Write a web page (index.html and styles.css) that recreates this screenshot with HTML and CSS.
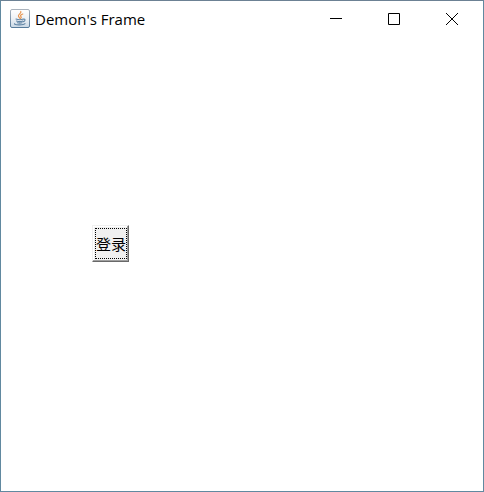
FILE: index.html
```html
<!DOCTYPE html>
<html lang="zh-CN">
<head>
<meta charset="utf-8">
<title>Demon's Frame</title>
<link rel="stylesheet" href="styles.css">
</head>
<body>
<div class="window">
  <header class="titlebar">
    <svg class="app-icon" viewBox="0 0 20 20" aria-hidden="true">
      <defs>
        <linearGradient id="tile" x1="0" y1="0" x2="0" y2="1">
          <stop offset="0" stop-color="#ffffff"/>
          <stop offset="0.5" stop-color="#eef2f6"/>
          <stop offset="1" stop-color="#c9d7e4"/>
        </linearGradient>
        <linearGradient id="edge" x1="0" y1="0" x2="0" y2="1">
          <stop offset="0" stop-color="#a9b2bc"/>
          <stop offset="1" stop-color="#577b9b"/>
        </linearGradient>
      </defs>
      <rect x="0.5" y="0.5" width="19" height="18" rx="1.5" fill="url(#tile)" stroke="url(#edge)"/>
      <path d="M10.8 2.5c1 2-3.300 2.800-2.300 4.800.3.700 1 1.200 1.400 2M12.800 5c-2.500 1-2.700 1.700-1.700 2.900.4.500.1 1-.5 1.500" fill="none" stroke="#e8954f" stroke-width="1.200" stroke-linecap="round"/>
      <path d="M6 10c2 .8 5.500.8 7.300 0M6.500 12c2 .8 4.500.8 6.200 0M7.500 13.700c1.500.6 3 .6 4.500 0M13.500 10.200c2.200-.5 1.800 2-.2 2.400M4.700 14.600c-1.700 1.500 8.800 1.900 10.300.1" fill="none" stroke="#6386a6" stroke-width="1.100" stroke-linecap="round"/>
    </svg>
    <h1 class="title">Demon's Frame</h1>
    <div class="controls">
      <button class="control" type="button" aria-label="Minimize">
        <svg viewBox="0 0 12 12" aria-hidden="true"><path d="M0 5.500h12"/></svg>
      </button>
      <button class="control" type="button" aria-label="Maximize">
        <svg viewBox="0 0 12 12" aria-hidden="true"><path d="M.5.500h11v11H.5z"/></svg>
      </button>
      <button class="control" type="button" aria-label="Close">
        <svg viewBox="0 0 12 12" aria-hidden="true"><path d="M0 0l12 12M12 0L0 12"/></svg>
      </button>
    </div>
  </header>
  <main class="content">
    <button class="login" type="button"><span class="login-label">登录</span></button>
  </main>
</div>
</body>
</html>
```
FILE: styles.css
```css
* {
  box-sizing: border-box;
}

body {
  margin: 0;
  background: #fff;
  color: #000;
  font-family: "Open Sans", "Noto Sans", "Noto Sans CJK SC", sans-serif;
}

.window {
  display: flex;
  flex-direction: column;
  min-height: 100vh;
  border: 1px solid #6189a0;
  border-top-color: #6c8194;
}

.titlebar {
  display: flex;
  align-items: center;
  height: 36px;
  padding-left: 9px;
}

.app-icon {
  width: 20px;
  height: 20px;
}

.title {
  flex: 1;
  margin: 0 0 0 5px;
  font-size: 15px;
  font-weight: 400;
  line-height: 20px;
}

.controls {
  display: flex;
  align-self: stretch;
  padding-right: 2px;
}

.control {
  display: grid;
  place-items: center;
  width: 58px;
  padding: 0;
  border: 0;
  background: none;
}

.control svg {
  width: 12px;
  height: 12px;
  overflow: visible;
  fill: none;
  stroke: #000;
}

.content {
  flex: 1;
  padding: 188px 0 0 91px;
}

.login {
  display: block;
  padding: 2px 1px 2px 2px;
  border: 1px solid;
  border-color: #f0f0f0 #696969 #696969 #f0f0f0;
  background: #f0f0f0;
  box-shadow: inset -1px -1px #a0a0a0, inset 1px 1px #fff;
  color: #000;
  font: 15px/29px "Noto Sans CJK SC", sans-serif;
}

.login-label {
  display: block;
  border: 1px dotted #000;
}
```
